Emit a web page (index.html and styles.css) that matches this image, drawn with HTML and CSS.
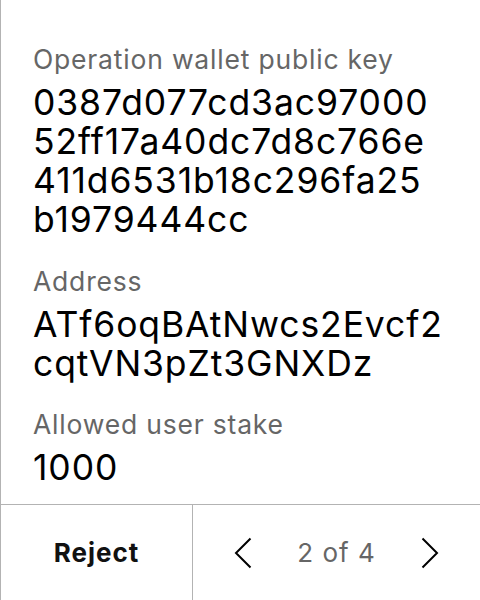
FILE: index.html
```html
<!DOCTYPE html>
<html>
<head>
<meta charset="utf-8">
<link rel="stylesheet" href="styles.css">
</head>
<body>
<div class="screen">
  <div class="content">
    <div class="field">
      <div class="label">Operation wallet public key</div>
      <div class="value">0387d077cd3ac97000<br>52ff17a40dc7d8c766e<br>411d6531b18c296fa25<br>b1979444cc</div>
    </div>
    <div class="field">
      <div class="label">Address</div>
      <div class="value">ATf6oqBAtNwcs2Evcf2<br>cqtVN3pZt3GNXDz</div>
    </div>
    <div class="field">
      <div class="label">Allowed user stake</div>
      <div class="value">1000</div>
    </div>
  </div>
  <div class="footer">
    <div class="reject">Reject</div>
    <div class="pager">
      <svg class="chev" width="18" height="32" viewBox="0 0 18 32"><path d="M16.5 1.5 L2 16 L16.5 30.5" fill="none" stroke="#000" stroke-width="2"/></svg>
      <span class="count">2 of 4</span>
      <svg class="chev" width="18" height="32" viewBox="0 0 18 32"><path d="M1.5 1.5 L16 16 L1.5 30.5" fill="none" stroke="#000" stroke-width="2"/></svg>
    </div>
  </div>
</div>
</body>
</html>
```
FILE: styles.css
```css
html, body {
  margin: 0;
  padding: 0;
  background: #fff;
}
.screen {
  width: 480px;
  height: 600px;
  box-sizing: border-box;
  border-left: 1px solid #b3b3b3;
  display: flex;
  flex-direction: column;
  font-family: Inter, "Noto Sans", sans-serif;
}
.content {
  flex: 1;
  padding: 43px 0 0 32px;
  display: flex;
  flex-direction: column;
  gap: 25.5px;
}
.label {
  font-size: 26.5px;
  line-height: 32px;
  letter-spacing: 0.8px;
  color: #666;
  margin-bottom: 8px;
}
.value {
  font-size: 35.5px;
  line-height: 39px;
  letter-spacing: 0.9px;
  color: #000;
}
.footer {
  height: 96px;
  box-sizing: border-box;
  border-top: 1px solid #b3b3b3;
  display: flex;
}
.reject {
  width: 191px;
  border-right: 1px solid #b3b3b3;
  display: flex;
  align-items: center;
  justify-content: center;
  font-size: 26px;
  letter-spacing: 1px;
  font-weight: 700;
  color: #111;
}
.pager {
  flex: 1;
  display: flex;
  align-items: center;
  justify-content: center;
  gap: 45px;
}
.count {
  font-size: 26px;
  letter-spacing: 1px;
  color: #666;
}
```
